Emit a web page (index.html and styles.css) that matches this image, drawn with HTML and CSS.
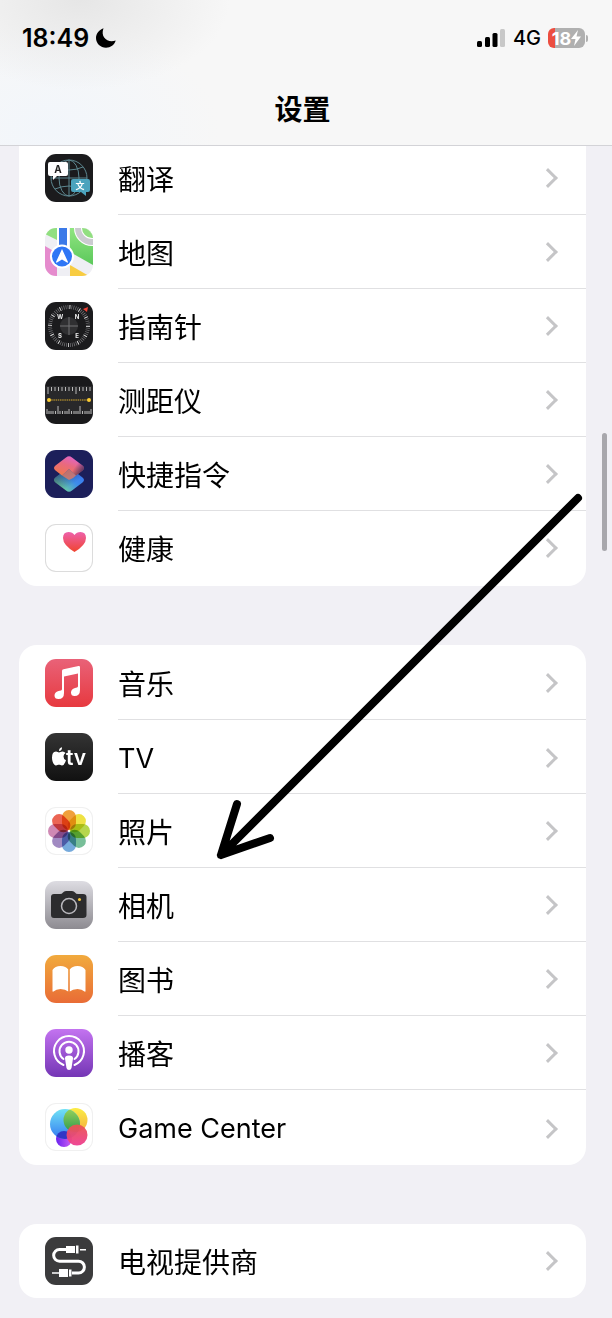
FILE: index.html
```html
<!DOCTYPE html>
<html lang="zh-CN">
<head>
    <meta charset="UTF-8">
    <meta name="viewport" content="width=device-width, initial-scale=1.0">
    <title>设置</title>
    <link rel="stylesheet" href="styles.css">
</head>
<body>
    <header class="header">
        <div class="status">
            <span class="time">18:49</span>
            <svg class="moon" viewBox="0 0 20 20"><path d="M7.500 .3C2.800 2.100 0 5.700 0 10C0 15.500 4.500 19.700 10 19.700C14.500 19.700 18.500 17 19.700 12.500C12 15.500 4 9.500 7.500 .3Z"/></svg>
            <svg class="signal" viewBox="0 0 29 19">
                <rect x="0" y="12" width="5" height="6" rx="1.500"/>
                <rect x="8" y="8" width="5" height="10" rx="1.500"/>
                <rect x="15.500" y="4" width="5" height="14" rx="1.500"/>
                <rect x="23" y="0" width="5" height="18" rx="1.500" fill="#c8c8c8"/>
            </svg>
            <span class="network">4G</span>
            <span class="battery">18<svg class="bolt" viewBox="0 0 10 16"><path d="M7 0L0 9H4.500L3 16L10 6.500H5.500Z"/></svg></span>
            <span class="battery-tip"></span>
        </div>
        <h1 class="title">设置</h1>
    </header>

    <main class="settings">
        <nav class="group">
            <a class="row" href="#translate">
                <svg class="icon" viewBox="0 0 48 48">
                    <rect width="48" height="48" fill="#1b1b1d"/>
                    <g fill="none" stroke="#5d8790" stroke-width="1">
                        <circle cx="24" cy="24" r="18"/>
                        <ellipse cx="24" cy="24" rx="10" ry="18"/>
                        <path d="M24 6V42M6 24H42M10 13Q24 19 38 13M10 35Q24 29 38 35"/>
                    </g>
                    <path d="M5 8H21Q23 8 23 10V20Q23 22 21 22H12L8 26V22H5Q3 22 3 20V10Q3 8 5 8Z" fill="#fff"/>
                    <path d="M28 25H43Q45 25 45 27V36Q45 38 43 38H41V42L36 38H28Q26 38 26 36V27Q26 25 28 25Z" fill="#4ba3bd"/>
                    <text class="letter" x="13" y="19" font-size="10" fill="#222">A</text>
                    <text class="letter" x="35" y="35" font-size="9" fill="#fff">文</text>
                </svg>
                <span class="label">翻译</span>
            </a>
            <a class="row" href="#maps">
                <svg class="icon" viewBox="0 0 48 48">
                    <defs>
                        <linearGradient id="map-green" x2="0" y2="1"><stop stop-color="#90e581"/><stop offset="1" stop-color="#5cc85b"/></linearGradient>
                    </defs>
                    <rect width="48" height="48" fill="#efeff4"/>
                    <path d="M0 0H12V12L0 6Z" fill="#91df80"/>
                    <path d="M25 0H48V37L25 24Z" fill="url(#map-green)"/>
                    <circle cx="47" cy="0" r="18" fill="#fff"/>
                    <circle cx="47" cy="0" r="17" fill="#cbcbd0"/>
                    <circle cx="47" cy="0" r="11" fill="#fff"/>
                    <circle cx="47" cy="0" r="10" fill="#91df80"/>
                    <path d="M0 18L12 25V48H0Z" fill="#e58bcd"/>
                    <path d="M25 37L44 48H25Z" fill="#f8cc42"/>
                    <path d="M12 0H24V24H12Z" fill="#fff"/>
                    <path d="M14 0H22V24H14Z" fill="#3b79e8"/>
                    <circle cx="17" cy="28.500" r="12" fill="#fff"/>
                    <circle cx="17" cy="28.500" r="10" fill="#2f76f5"/>
                    <path d="M17 21L23 34Q23 35 22 34.500L17 31.500L12 34.500Q11 35 11 34Z" fill="#fff"/>
                </svg>
                <span class="label">地图</span>
            </a>
            <a class="row" href="#compass">
                <svg class="icon" viewBox="0 0 48 48">
                    <rect width="48" height="48" fill="#1b1b1d"/>
                    <circle cx="24" cy="24" r="19" fill="none" stroke="#77777a" stroke-width="4" stroke-dasharray=".7 1.290"/>
                    <circle cx="24" cy="24" r="19" fill="none" stroke="#ddd" stroke-width="4" stroke-dasharray=".8 9.148"/>
                    <circle cx="24" cy="24" r="9" fill="#303032"/>
                    <path d="M24 15V33M15 24H33" stroke="#707073" stroke-width="1"/>
                    <path d="M43 5L42 10L38 7Z" fill="#f34235"/>
                    <g class="letter" font-size="6" fill="#eee">
                        <text x="15" y="17">W</text>
                        <text x="32" y="17">N</text>
                        <text x="15" y="36">S</text>
                        <text x="32" y="36">E</text>
                    </g>
                </svg>
                <span class="label">指南针</span>
            </a>
            <a class="row" href="#measure">
                <svg class="icon" viewBox="0 0 48 48">
                    <rect width="48" height="48" fill="#19191b"/>
                    <rect y="10" width="48" height="28" fill="#28282a"/>
                    <path d="M3 11V18M6.500 11V15M10 11V15M13.500 11V15M17 11V15M20.500 11V15M24 11V15M27.500 11V15M31 11V18M34.500 11V15M38 11V15M41.500 11V15M45 11V15" stroke="#b9b9b9" stroke-width="1"/>
                    <path d="M2 33V38M4 35V38M6 35V38M8 35V38M10.500 35V38M13 30V38M15 35V38M17.500 35V38M20 35V38M22 35V38M24 33V38M26.500 35V38M29 35V38M31 35V38M33 35V38M35 30V38M37.500 35V38M40 35V38M42 35V38M44 35V38M46 33V38" stroke="#b9b9b9" stroke-width="1"/>
                    <path d="M4 24H44" stroke="#d9ac2e" stroke-width="1" stroke-dasharray="1.500 .7"/>
                    <circle cx="4" cy="24" r="2" fill="#fccd35"/>
                    <circle cx="44" cy="24" r="2" fill="#fccd35"/>
                </svg>
                <span class="label">测距仪</span>
            </a>
            <a class="row" href="#shortcuts">
                <svg class="icon" viewBox="0 0 48 48">
                    <defs>
                        <linearGradient id="cut-low" x1="0" y1="1" x2="1" y2=".3"><stop offset=".2" stop-color="#6fd39a"/><stop offset=".65" stop-color="#3e8de8"/><stop offset="1" stop-color="#3976f2"/></linearGradient>
                        <linearGradient id="cut-shade" x1="0" y1="0" x2=".6" y2=".7"><stop stop-color="#1c1f5a" stop-opacity=".8"/><stop offset="1" stop-color="#1c1f5a" stop-opacity="0"/></linearGradient>
                        <linearGradient id="cut-top" x1=".7" y1="0" x2=".2" y2=".9"><stop stop-color="#df64cf"/><stop offset=".5" stop-color="#e96980"/><stop offset="1" stop-color="#ef7650"/></linearGradient>
                        <linearGradient id="cut-dark" x1=".6" y1=".4" x2="1" y2=".7"><stop stop-color="#312657" stop-opacity="0"/><stop offset="1" stop-color="#312657" stop-opacity=".8"/></linearGradient>
                    </defs>
                    <rect width="48" height="48" fill="#1c1f5a"/>
                    <path d="M21 19.500Q24 17 27 19.500L37.500 27.500Q40.500 30 37.500 32.500L27 40.500Q24 43 21 40.500L10.500 32.500Q7.500 30 10.500 27.500Z" fill="url(#cut-low)"/>
                    <path d="M21 19.500Q24 17 27 19.500L37.500 27.500Q40.500 30 37.500 32.500L27 40.500Q24 43 21 40.500L10.500 32.500Q7.500 30 10.500 27.500Z" fill="url(#cut-shade)"/>
                    <path d="M21 7.500Q24 5 27 7.500L37.500 15.500Q40.500 18 37.500 20.500L31 25.500L24 19L17 25.500L10.500 20.500Q7.500 18 10.500 15.500Z" fill="url(#cut-top)"/>
                    <path d="M24 19L31 25.500Q29 28 24 30L17 25.500Z" fill="#ed7a5c" opacity=".75"/>
                    <path d="M21 7.500Q24 5 27 7.500L37.500 15.500Q40.500 18 37.500 20.500L31 25.500L24 19Z" fill="url(#cut-dark)"/>
                </svg>
                <span class="label">快捷指令</span>
            </a>
            <a class="row" href="#health">
                <svg class="icon icon-light" viewBox="0 0 48 48">
                    <defs>
                        <linearGradient id="heart" x2="0" y2="1"><stop stop-color="#ee61ab"/><stop offset="1" stop-color="#f0442f"/></linearGradient>
                    </defs>
                    <path d="M29.500 28Q18 21 18 14Q18 8 23.500 8Q27.500 8 29.500 11Q31.500 8 35.500 8Q41 8 41 14Q41 21 29.500 28Z" fill="url(#heart)"/>
                </svg>
                <span class="label">健康</span>
            </a>
        </nav>

        <nav class="group">
            <a class="row" href="#music">
                <svg class="icon" viewBox="0 0 48 48">
                    <defs>
                        <linearGradient id="music" x2="0" y2="1"><stop stop-color="#e96278"/><stop offset="1" stop-color="#e7393f"/></linearGradient>
                    </defs>
                    <rect width="48" height="48" fill="url(#music)"/>
                    <path d="M17 12Q17 10.500 18.500 10.200L33.500 7Q35 6.700 35 8.300V31Q35 37 29.500 37Q26 37 26 33.500Q26 30 30 29L32 28.500Q33 28.200 33 27V14.500L19 17.500V34Q19 40 13.500 40Q9.500 40 9.500 36.500Q9.500 33 13.500 32L16 31.500Q17 31.200 17 30Z" fill="#fff"/>
                </svg>
                <span class="label">音乐</span>
            </a>
            <a class="row" href="#tv">
                <svg class="icon" viewBox="0 0 48 48">
                    <defs>
                        <linearGradient id="tv" x2="0" y2="1"><stop stop-color="#343434"/><stop offset="1" stop-color="#111"/></linearGradient>
                    </defs>
                    <rect width="48" height="48" fill="url(#tv)"/>
                    <path d="M14 19.500C15 19.500 16 18.500 17.500 18.500Q19.500 18.500 20.500 20Q18.500 21.300 18.500 23.500Q18.500 26.200 21 27.300Q19.300 32.500 17 32.500C15.800 32.500 15.300 31.800 14 31.800C12.700 31.800 12.200 32.500 11 32.500C9 32.500 7 28.500 7 24.800Q7 18.500 11 18.500C12.300 18.500 13 19.500 14 19.500ZM14 18Q14 15 17 14.300Q17.200 17.500 14 18Z" fill="#fff"/>
                    <text class="tv-text" x="21" y="32" font-size="21" fill="#fff">tv</text>
                </svg>
                <span class="label label-latin">TV</span>
            </a>
            <a class="row" href="#photos">
                <svg class="icon icon-pale petals" viewBox="0 0 48 48">
                    <rect x="17" y="3" width="14" height="20" rx="7" fill="#f0a03c"/>
                    <rect x="17" y="3" width="14" height="20" rx="7" fill="#efe244" transform="rotate(45 24 24)"/>
                    <rect x="17" y="3" width="14" height="20" rx="7" fill="#b6d64d" transform="rotate(90 24 24)"/>
                    <rect x="17" y="3" width="14" height="20" rx="7" fill="#78bf99" transform="rotate(135 24 24)"/>
                    <rect x="17" y="3" width="14" height="20" rx="7" fill="#76aadc" transform="rotate(180 24 24)"/>
                    <rect x="17" y="3" width="14" height="20" rx="7" fill="#a18ac2" transform="rotate(225 24 24)"/>
                    <rect x="17" y="3" width="14" height="20" rx="7" fill="#cf89b4" transform="rotate(270 24 24)"/>
                    <rect x="17" y="3" width="14" height="20" rx="7" fill="#eb6554" transform="rotate(315 24 24)"/>
                </svg>
                <span class="label">照片</span>
            </a>
            <a class="row" href="#camera">
                <svg class="icon" viewBox="0 0 48 48">
                    <defs>
                        <linearGradient id="camera" x2="0" y2="1"><stop stop-color="#dddce2"/><stop offset="1" stop-color="#8d8b91"/></linearGradient>
                    </defs>
                    <rect width="48" height="48" fill="url(#camera)"/>
                    <path d="M9 13H15Q17 13 18 11.500Q19 10 21 10H27Q29 10 30 11.500Q31 13 33 13H38Q41.500 13 41.500 16V34Q41.500 37 38 37H9Q6 37 6 34V16Q6 13 9 13Z" fill="#2c2c2e"/>
                    <circle cx="24" cy="25" r="7.500" fill="none" stroke="#b9b8bd" stroke-width="1.500"/>
                    <circle cx="34.500" cy="18.500" r="1.500" fill="#f6c93a"/>
                </svg>
                <span class="label">相机</span>
            </a>
            <a class="row" href="#books">
                <svg class="icon" viewBox="0 0 48 48">
                    <defs>
                        <linearGradient id="books" x2="0" y2="1"><stop stop-color="#f1aa3d"/><stop offset="1" stop-color="#e96c36"/></linearGradient>
                    </defs>
                    <rect width="48" height="48" fill="url(#books)"/>
                    <path d="M7.500 15Q10 11 15.500 11Q21 11 23.200 14.500V36.500Q20.500 34 15.500 34Q11 34 8.500 36.500Q7.500 37 7.500 36ZM40.500 15Q38 11 32.500 11Q27 11 24.800 14.500V36.500Q27.500 34 32.500 34Q37 34 39.500 36.500Q40.500 37 40.500 36Z" fill="#fff"/>
                </svg>
                <span class="label">图书</span>
            </a>
            <a class="row" href="#podcasts">
                <svg class="icon" viewBox="0 0 48 48">
                    <defs>
                        <linearGradient id="podcasts" x2="0" y2="1"><stop stop-color="#c373f0"/><stop offset="1" stop-color="#7436b5"/></linearGradient>
                    </defs>
                    <rect width="48" height="48" fill="url(#podcasts)"/>
                    <g fill="none" stroke="#fff" stroke-width="2" stroke-linecap="round">
                        <path d="M18.500 36A15 15 0 1 1 29.500 36"/>
                        <path d="M18.500 30A9.500 9.500 0 1 1 29.500 30"/>
                    </g>
                    <circle cx="24" cy="21" r="3.700" fill="#fff"/>
                    <path d="M24 26.500Q28.300 26.500 28 29.500L26.500 39Q26 41 24 41Q22 41 21.500 39L20 29.500Q19.700 26.500 24 26.500Z" fill="#fff"/>
                </svg>
                <span class="label">播客</span>
            </a>
            <a class="row" href="#game-center">
                <svg class="icon icon-pale" viewBox="0 0 48 48">
                    <defs>
                        <linearGradient id="ball-blue" x2="0" y2="1"><stop stop-color="#70e2f5"/><stop offset="1" stop-color="#347af2"/></linearGradient>
                        <linearGradient id="ball-yellow" x2="0" y2="1"><stop stop-color="#fbed45"/><stop offset="1" stop-color="#f4ae40"/></linearGradient>
                        <linearGradient id="ball-green" x2="0" y2="1"><stop stop-color="#9bd35c"/><stop offset="1" stop-color="#2d9b4e"/></linearGradient>
                        <linearGradient id="ball-purple"><stop stop-color="#6a23f0"/><stop offset="1" stop-color="#cf60f2"/></linearGradient>
                        <linearGradient id="ball-red" x2="0" y2="1"><stop stop-color="#e95450"/><stop offset="1" stop-color="#ee3e91"/></linearGradient>
                        <clipPath id="blue-clip"><circle cx="20" cy="21" r="15"/></clipPath>
                    </defs>
                    <circle cx="19" cy="36" r="8" fill="url(#ball-purple)"/>
                    <circle cx="30.500" cy="17" r="12" fill="url(#ball-yellow)"/>
                    <circle cx="20" cy="21" r="15" fill="url(#ball-blue)"/>
                    <g clip-path="url(#blue-clip)">
                        <circle cx="30.500" cy="17" r="12" fill="url(#ball-green)"/>
                        <circle cx="19" cy="36" r="8" fill="#3036c6"/>
                    </g>
                    <circle cx="32" cy="32" r="10.500" fill="url(#ball-red)" opacity=".95"/>
                </svg>
                <span class="label label-latin">Game Center</span>
            </a>
        </nav>

        <nav class="group">
            <a class="row" href="#tv-provider">
                <svg class="icon" viewBox="0 0 48 48">
                    <rect width="48" height="48" fill="#3b3b3c"/>
                    <path d="M22 12.500H14.500A5.800 5.800 0 0 0 14.500 24.200H33.500A5.800 5.800 0 0 1 33.500 36H27" fill="none" stroke="#fff" stroke-width="3"/>
                    <path d="M21 9H30V16H21ZM31 8.500H33.500V16.500H31ZM35 12H41V13.500H35ZM14 32H23V40H14ZM24 32.500H26.500V39.500H24ZM7 35.300H14V36.800H7Z" fill="#fff"/>
                </svg>
                <span class="label">电视提供商</span>
            </a>
        </nav>

        <svg class="arrow" viewBox="0 0 370 370">
            <path d="M363 7L6 364M22 313L6 364L55 347"/>
        </svg>
        <div class="scrollbar"></div>
    </main>
</body>
</html>
```

FILE: styles.css
```css
* {
    box-sizing: border-box;
}
body {
    margin: 0;
    background: #f1f0f5;
    color: #000;
    font-family: Inter, "Noto Sans CJK SC", sans-serif;
}
.header {
    position: sticky;
    top: 0;
    z-index: 2;
    padding: 24px 24px 12px 22px;
    background:
        radial-gradient(ellipse 150px 90px at 80px 0, #e6e6e6, rgba(230, 230, 230, 0)),
        radial-gradient(ellipse 170px 110px at 50px 130px, #f2f6fb, rgba(242, 246, 251, 0)),
        #f7f7f7;
    border-bottom: 1px solid #d3d3d7;
}
.status {
    display: flex;
    align-items: center;
    height: 28px;
}
.time {
    font-size: 25px;
    font-weight: 600;
}
.moon {
    width: 20px;
    height: 20px;
    margin-left: 7px;
}
.signal {
    width: 29px;
    height: 19px;
    margin-left: auto;
    margin-right: 7px;
}
.network {
    font-size: 20px;
    font-weight: 500;
}
.battery {
    display: flex;
    align-items: center;
    justify-content: center;
    width: 37px;
    height: 20px;
    margin-left: 7px;
    border-radius: 6px;
    background: linear-gradient(to right, #ec4e40 7px, #b0b0b0 7px);
    color: #fff;
    font-size: 18px;
    font-weight: 700;
}
.bolt {
    width: 10px;
    height: 16px;
    fill: #fff;
}
.battery-tip {
    width: 2px;
    height: 7px;
    margin-left: 1px;
    border-radius: 0 2px 2px 0;
    background: #b0b0b0;
}
.title {
    margin: 36px 0 0;
    padding-right: 5px;
    font-size: 28px;
    font-weight: 700;
    line-height: 45px;
    text-align: center;
}
.settings {
    position: relative;
    display: flex;
    flex-direction: column;
    gap: 59px;
    margin-top: -6px;
    padding: 0 26px 20px 19px;
}
.group {
    padding: 1px 0;
    border-radius: 18px;
    background: #fff;
    overflow: hidden;
}
/* scrolled under the header */
.group:first-child {
    border-radius: 0 0 18px 18px;
}
.group:nth-child(3) {
    padding: 0;
}
.row {
    display: flex;
    align-items: center;
    gap: 25px;
    height: 74px;
    padding-left: 26px;
    color: #000;
    text-decoration: none;
}
.icon {
    flex: none;
    width: 48px;
    height: 48px;
    border-radius: 11px;
}
.icon-light {
    box-shadow: inset 0 0 0 1px #dcdcdc;
}
.icon-pale {
    box-shadow: inset 0 0 0 1px #f0f0f0;
}
.petals rect {
    mix-blend-mode: multiply;
}
.letter {
    font-weight: 700;
    text-anchor: middle;
}
.tv-text {
    font-weight: 600;
}
.label {
    display: flex;
    flex: 1;
    align-items: center;
    justify-content: space-between;
    height: 74px;
    padding-right: 31px;
    border-bottom: 1px solid #e0e0e2;
    font-size: 28px;
}
.label-latin {
    padding-top: 3px;
    font-size: 27px;
}
.row:last-child .label {
    border-bottom: none;
}
.label::after {
    content: "";
    box-sizing: border-box;
    width: 14px;
    height: 14px;
    border: solid #c5c5c7;
    border-width: 3px 3px 0 0;
    transform: rotate(45deg);
}
.arrow {
    position: absolute;
    top: 351px;
    left: 215px;
    width: 370px;
    height: 370px;
    fill: none;
    stroke: #000;
    stroke-width: 8;
    stroke-linecap: round;
    stroke-linejoin: round;
    pointer-events: none;
}
.scrollbar {
    position: absolute;
    top: 293px;
    right: 5px;
    width: 5px;
    height: 118px;
    border-radius: 3px;
    background: #a8a7ac;
}
```
